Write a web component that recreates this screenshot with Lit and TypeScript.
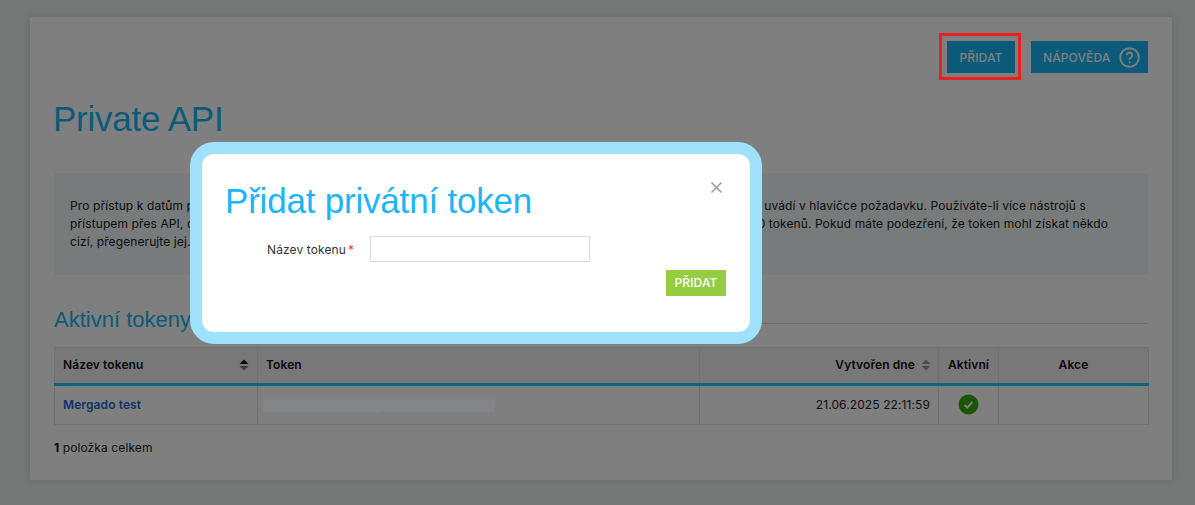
import { LitElement, html, css } from "lit";
import { customElement } from "lit/decorators.js";

@customElement("app-root")
export class AppRoot extends LitElement {
  static styles = css`
    :host { display: block; height: 505px; overflow: hidden; position: relative; background: #ebeeed; font-family: Inter, "Noto Sans", sans-serif; color: #222; font-size: 12px; letter-spacing: .1px; }
    .page { padding: 17px 23px 25px 30px; box-sizing: border-box; height: 505px; }
    .card { background: #fff; height: 463px; box-sizing: border-box; padding: 24px 24px 0; box-shadow: 0 0 8px rgba(0,0,0,.12); }
    .actions { display: flex; justify-content: flex-end; gap: 16px; height: 32px; }
    .btn { background: #16b5f5; color: #fff; font-weight: 500; font-size: 12px; letter-spacing: .1px; display: flex; align-items: center; justify-content: center; box-sizing: border-box; }
    .btn.add { width: 68px; }
    .btn.help { width: 117px; justify-content: flex-start; padding-left: 12px; gap: 9px; }
    h1, h3 { font-family: "Liberation Sans", Arial, sans-serif; font-weight: 400; margin: 0; color: #16b5f5; font-size: 35px; letter-spacing: -.25px; line-height: 42px; }
    h1 { margin-top: 25px; margin-left: -1px; }
    .info { margin-top: 33px; height: 102px; background: #eef6f7; padding: 24px 16px 0; box-sizing: border-box; line-height: 18px; font-size: 12px; color: #1a1a1a; white-space: nowrap; }
    h2 { font-family: "Liberation Sans", Arial, sans-serif; display: flex; align-items: center; gap: 8px; font-size: 22px; line-height: 26px; margin: 35px 0 0; color: #16b5f5; font-weight: 400; letter-spacing: 0; height: 20px; }
    h2::after { content: ""; flex: 1; height: 1px; background: #ddd; margin-top: 6px; }
    table { border-collapse: collapse; table-layout: fixed; width: 1094px; margin-top: 17px; }
    th { height: 37px; background: #f1f1f1; font-weight: 600; text-align: left; padding: 0 8px 2px; border: 1px solid #e0e0e0; border-bottom: 3px solid #15cfff; box-sizing: border-box; color: #111; }
    td { height: 40px; padding: 0 8px 1px; border: 1px solid #e0e0e0; box-sizing: border-box; }
    .th-in { display: flex; align-items: center; justify-content: space-between; gap: 6px; }
    .right { text-align: right; }
    .th-in.end { justify-content: flex-end; margin-right: -1px; }
    .center { text-align: center; }
    th.tight { padding: 0 0 2px; }
    .name { color: #2468d0; font-weight: 600; }
    .masked { display: block; position: relative; z-index: 1; width: 232px; height: 13px; background: #848589; margin: 1px 0 0 -3px; }
    .masked::after { content: ""; position: absolute; left: 51px; bottom: 0; width: 1px; height: 1px; background: #5a7a99; box-shadow: 68px 0 #5a7a99; }
    .check { display: block; margin: 0 auto; }
    .count { margin-top: 15px; line-height: 16px; }
    .count b { font-weight: 700; color: #111; }
    .backdrop { position: absolute; inset: 0; background: rgba(0,0,0,.5); }
    .marker { position: absolute; left: 939px; top: 33px; width: 82px; height: 47px; box-sizing: border-box; border: 3px solid #e8201f; }
    .modal { position: absolute; left: 190px; top: 142px; width: 572px; height: 202px; box-sizing: border-box; border: 12px solid #9fe0fa; border-radius: 24px; background: #fff; padding: 0 24px; }
    .modal h3 { margin: 26px 0 0 -1px; color: #1cb5f5; letter-spacing: -.2px; }
    .close { position: absolute; right: 27px; top: 27px; width: 13px; height: 13px; }
    .row { display: flex; align-items: center; margin-top: 14px; }
    .label { width: 128px; text-align: right; color: #333; letter-spacing: .1px; }
    .req { color: #f33; margin-left: 2px; }
    input { margin-left: 16px; width: 220px; height: 26px; box-sizing: border-box; border: 1px solid #d9d9d9; outline: none; background: #fff; padding: 0 6px; }
    .foot { display: flex; justify-content: flex-end; margin-top: 8px; }
    .btn.ok { background: #94cc42; width: 60px; height: 26px; padding-bottom: 2px; }
  `;

  private sort(up: string, down: string) {
    return html`<svg width="10" height="14" viewBox="0 0 10 14"><path d="M5 1.5 9.5 6H.5z" fill=${up}/><path d="M5 12.5.5 8h9z" fill=${down}/></svg>`;
  }

  render() {
    return html`
      <div class="page">
        <div class="card">
          <div class="actions">
            <div class="btn add">PŘIDAT</div>
            <div class="btn help">NÁPOVĚDA
              <svg width="21" height="21" viewBox="0 0 21 21" fill="none" stroke="#fff"><circle cx="10.5" cy="10.5" r="9.3" stroke-width="1.9"/><path d="M7.8 8.2a2.7 2.7 0 1 1 4.2 2.3c-1 .6-1.5 1.1-1.5 2.2" stroke-width="1.9"/><circle cx="10.5" cy="15.3" r=".7" fill="#fff" stroke-width=".8"/></svg>
            </div>
          </div>
          <h1>Private API</h1>
          <div class="info">
            Pro přístup k datům přes Private API slouží privátní token, který je vázaný na váš konkrétní obchodní účet a který se pak uvádí v hlavičce požadavku. Používáte-li více nástrojů s<br>
            přístupem přes API, doporučujeme, pro každý z nich vytvořit samostatný vlastní token. Každý účet může mít nejvýše 100 tokenů. Pokud máte podezření, že token mohl získat někdo<br>
            cizí, přegenerujte jej.
          </div>
          <h2>Aktivní tokeny</h2>
          <table>
            <colgroup><col style="width:203px"><col style="width:442px"><col style="width:239px"><col style="width:60px"><col style="width:150px"></colgroup>
            <thead><tr>
              <th><div class="th-in">Název tokenu ${this.sort("#111", "#777")}</div></th>
              <th>Token</th>
              <th><div class="th-in end">Vytvořen dne ${this.sort("#999", "#999")}</div></th>
              <th class="center tight">Aktivní</th>
              <th class="center">Akce</th>
            </tr></thead>
            <tbody><tr>
              <td class="name">Mergado test</td>
              <td><span class="masked"></span></td>
              <td class="right">21.06.2025 22:11:59</td>
              <td><svg class="check" width="21" height="21" viewBox="0 0 21 21"><circle cx="10.5" cy="10.5" r="10" fill="#38a80c"/><path d="M6.5 10.8 9.3 13.6 14.5 7.8" fill="none" stroke="#fff" stroke-width="1.8"/></svg></td>
              <td></td>
            </tr></tbody>
          </table>
          <div class="count"><b>1</b> položka celkem</div>
        </div>
      </div>
      <div class="backdrop"></div>
      <div class="marker"></div>
      <div class="modal">
        <h3>Přidat privátní token</h3>
        <svg class="close" viewBox="0 0 13 13" fill="none" stroke="#9a9a9a" stroke-width="1.5"><path d="M1.5 1.5 11.5 11.5M11.5 1.5 1.5 11.5"/></svg>
        <div class="row"><div class="label">Název tokenu<span class="req">*</span></div><input type="text"></div>
        <div class="foot"><div class="btn ok">PŘIDAT</div></div>
      </div>
    `;
  }
}
